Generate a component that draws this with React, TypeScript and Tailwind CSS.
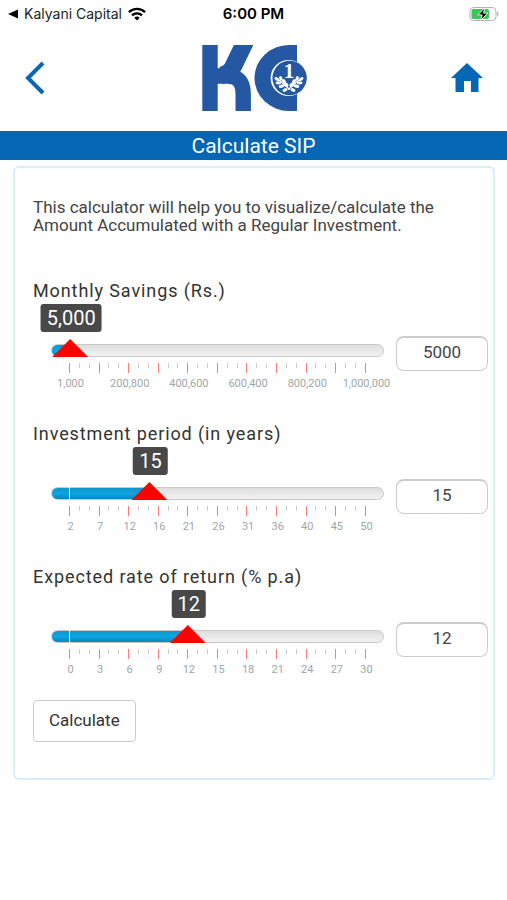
import { useId, useState } from 'react';

interface SliderFieldProps {
  label: string;
  min: number;
  max: number;
  value: number;
  marks: string[];
  onChange: (value: number) => void;
}

// 10 major steps, each split by two minor ticks
const TICKS = Array.from({ length: 31 }, (_, i) => i);

function SliderField({ label, min, max, value, marks, onChange }: SliderFieldProps) {
  const id = useId();
  const ratio = Math.min(1, Math.max(0, (value - min) / (max - min)));
  // the thumb is 36px wide, so its centre travels 18px short of each end
  const position = `calc(18px + (100% - 36px) * ${ratio})`;

  return (
    <div>
      <label htmlFor={id} className="block text-lg leading-5 tracking-wider text-[#333]">
        {label}
      </label>

      <div className="mt-[35px] flex items-start gap-3">
        <div className="ml-[18px] min-w-0 flex-1 pt-2">
          <div className="relative">
            <div className="h-[13px] overflow-hidden rounded-full border border-[#c8c8c8] bg-linear-to-b from-[#dedede] to-[#f2f2f2]">
              <div
                className="h-full bg-linear-to-b from-[#0e96cc] via-[#0ba5e0] to-[#0788bd]"
                style={{ width: position }}
              />
            </div>
            <span className="absolute inset-y-0 left-[18px] w-px bg-white" />
            <input
              type="range"
              aria-label={`${label} slider`}
              min={min}
              max={max}
              value={value}
              onChange={(e) => onChange(Number(e.target.value))}
              className="absolute bottom-0 left-0 h-[18px] w-full cursor-pointer appearance-none bg-transparent [&::-webkit-slider-thumb]:h-[18px] [&::-webkit-slider-thumb]:w-9 [&::-webkit-slider-thumb]:appearance-none [&::-webkit-slider-thumb]:bg-[#ff0000] [&::-webkit-slider-thumb]:[clip-path:polygon(50%_0,100%_100%,0_100%)]"
            />
            <output
              className="absolute bottom-[25px] ml-px -translate-x-1/2 rounded-[3px] bg-[#484848] px-1.5 text-xl leading-7 text-white"
              style={{ left: position }}
            >
              {value.toLocaleString('en-US')}
            </output>
          </div>

          <div className="mt-1.5 flex h-2.5 items-start justify-between px-[18px]">
            {TICKS.map((tick) => (
              <span key={tick} className={tick % 3 === 0 ? 'h-2.5 w-px bg-[#ff7b7b]' : 'h-[5px] w-px bg-[#cdcdcd]'} />
            ))}
          </div>

          <div className="mt-[5px] -mb-px flex justify-between pr-[17px] pl-[19px] text-[11px] leading-3 text-[#a0a6a8]">
            {marks.map((mark) => (
              <span key={mark} className="flex w-px justify-center">
                {mark}
              </span>
            ))}
          </div>
        </div>

        <input
          id={id}
          type="text"
          inputMode="numeric"
          value={value}
          onChange={(e) => onChange(Number(e.target.value) || 0)}
          className="h-[35px] w-[92px] rounded-lg border border-t-2 border-[#ccc] bg-white pb-1 text-center text-[17px] text-[#444]"
        />
      </div>
    </div>
  );
}

function WifiIcon() {
  return (
    <svg viewBox="0 0 18 14" className="h-3.5 w-[18px]" fill="none" stroke="#000" strokeWidth="2.3" aria-hidden="true">
      <path d="M0.9 5.1a11.6 11.6 0 0 1 16.2 0" />
      <path d="M4 8.3a7.2 7.2 0 0 1 10 0" />
      <path d="M9 13.4 6.3 10.7a3.9 3.9 0 0 1 5.4 0z" fill="#000" stroke="none" />
    </svg>
  );
}

function BatteryIcon() {
  return (
    <svg viewBox="0 0 30 14" className="h-3.5 w-[30px]" aria-hidden="true">
      <rect x="1" y="0.5" width="26" height="13" rx="3.6" fill="#fff" stroke="#b4b4b4" />
      <path d="M28.2 4.8a2.4 2.4 0 0 1 0 4.4z" fill="#a9a9a9" />
      <rect x="2.5" y="2" width="17.5" height="10" rx="2" fill="#34c759" />
      <path d="M15.8 0.8 8.8 7.9h4.3l-1.4 5.4 7.2-7.2h-4.4z" fill="#000" stroke="#fff" strokeWidth="0.9" />
    </svg>
  );
}

// one side of the wreath inside the coin
function Branch() {
  return (
    <g fill="#fff">
      <ellipse cx="75.8" cy="35" rx="2.6" ry="1.6" transform="rotate(35 75.8 35)" />
      <ellipse cx="79.8" cy="34.4" rx="1.6" ry="2.4" transform="rotate(-20 79.8 34.4)" />
      <ellipse cx="77.4" cy="38.8" rx="2.9" ry="1.6" />
      <ellipse cx="83" cy="37.4" rx="1.7" ry="2.5" transform="rotate(-30 83 37.4)" />
      <ellipse cx="80.6" cy="42.2" rx="2.9" ry="1.6" transform="rotate(-10 80.6 42.2)" />
      <ellipse cx="85.4" cy="40.8" rx="1.7" ry="2.5" transform="rotate(-45 85.4 40.8)" />
      <ellipse cx="84" cy="46" rx="2.6" ry="1.6" transform="rotate(-25 84 46)" />
      <path d="m76 34.500 5 4 4 4 4 3" fill="none" stroke="#fff" strokeWidth="1.2" />
    </g>
  );
}

function Logo() {
  return (
    <svg viewBox="0 0 106 68" className="h-[68px] w-[106px]" role="img" aria-label="Kalyani Capital">
      <clipPath id="logo-band">
        <rect x="0" y="1" width="106" height="66" />
      </clipPath>
      <g clipPath="url(#logo-band)">
        <rect x="1.3" y="0" width="15.4" height="68" fill="#2558a2" />
        <g fill="none" stroke="#2558a2">
          <path d="M45-4 33 21Q29 30 20 31.500" strokeWidth="17.5" />
          <path d="M10 32H26Q42.2 32 42.2 50V68" strokeWidth="15.4" />
        </g>
        <ellipse cx="88" cy="34" rx="34.5" ry="33" fill="#2558a2" />
        <rect x="88" y="1" width="8" height="66" fill="#2558a2" />
        <rect x="96" y="0" width="34" height="68" fill="#fff" />
      </g>
      <circle cx="87.6" cy="34" r="18" fill="#fff" />
      <circle cx="88.6" cy="34" r="17.2" fill="#2558a2" />
      <text x="88" y="34" textAnchor="middle" fontFamily="Liberation Serif, serif" fontSize="21" fontWeight="bold" fill="#fff">
        1
      </text>
      <Branch />
      <g transform="translate(176 0) scale(-1 1)">
        <Branch />
      </g>
    </svg>
  );
}

export default function App() {
  const [savings, setSavings] = useState(5000);
  const [years, setYears] = useState(15);
  const [rate, setRate] = useState(12);

  return (
    <div className="min-h-screen bg-white font-['Roboto',sans-serif]">
      {/* Status bar */}
      <div className="grid h-7 grid-cols-3 items-center px-2 font-['Inter',sans-serif] text-sm text-[#222]">
        <div className="flex items-center gap-1.5 whitespace-nowrap">
          <span className="flex items-center gap-1.5">
            <svg viewBox="0 0 10 10" className="size-2.5" aria-hidden="true">
              <path d="M0 5 10 0.500v9z" fill="#000" />
            </svg>
            Kalyani Capital
          </span>
          <WifiIcon />
        </div>
        <div className="text-center text-[15px] font-semibold text-black">6:00 PM</div>
        <div className="flex justify-end">
          <BatteryIcon />
        </div>
      </div>

      {/* Header */}
      <header className="flex h-[103px] items-center justify-between px-6 pb-1">
        <button type="button" aria-label="Back" className="w-8">
          <svg viewBox="0 0 22 34" className="h-[34px] w-[22px]" fill="none" stroke="#0a67b2" strokeWidth="4" aria-hidden="true">
            <path d="M19 2 4 17l15 15" />
          </svg>
        </button>
        <Logo />
        <a href="#home" aria-label="Home">
          <svg viewBox="0 0 32 29" className="h-[29px] w-8" aria-hidden="true">
            <path d="M16 0 32 15h-4.500v14H20V18h-7v11H4.500V15H0z" fill="#0566b4" />
          </svg>
        </a>
      </header>

      <h1 className="bg-[#0566b3] pt-px text-center text-[21px] leading-7 text-white">Calculate SIP</h1>

      <main className="mr-3 ml-[13px] mt-1.5 rounded-md border-2 border-[#d8eff3] pt-[30px] pr-[5px] pb-9 pl-[18px]">
        <p className="pr-10 text-[17px] leading-[18px] text-[#444]">
          This calculator will help you to visualize/calculate the Amount Accumulated with a Regular Investment.
        </p>

        <form onSubmit={(e) => e.preventDefault()}>
          <div className="mt-[47px] flex flex-col gap-[35px]">
            <SliderField
              label="Monthly Savings (Rs.)"
              min={1000}
              max={1000000}
              value={savings}
              marks={['1,000', '200,800', '400,600', '600,400', '800,200', '1,000,000']}
              onChange={setSavings}
            />
            <SliderField
              label="Investment period (in years)"
              min={2}
              max={50}
              value={years}
              marks={['2', '7', '12', '16', '21', '26', '31', '36', '40', '45', '50']}
              onChange={setYears}
            />
            <SliderField
              label="Expected rate of return (% p.a)"
              min={0}
              max={30}
              value={rate}
              marks={['0', '3', '6', '9', '12', '15', '18', '21', '24', '27', '30']}
              onChange={setRate}
            />
          </div>

          <button
            type="submit"
            className="mt-[25px] h-[42px] rounded border border-[#ccc] bg-white px-[15px] text-[17px] text-[#333]"
          >
            Calculate
          </button>
        </form>
      </main>
    </div>
  );
}
